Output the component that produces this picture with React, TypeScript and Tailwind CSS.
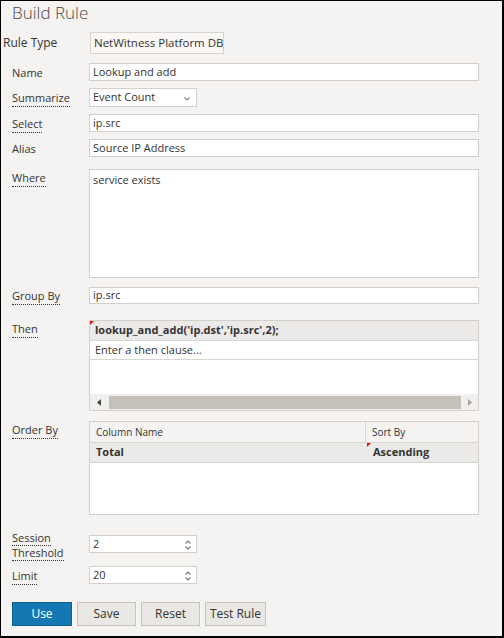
import React from "react";

const font = { fontFamily: '"Open Sans", "Noto Sans", sans-serif' };

function Label({ children, dotted = true, className = "" }: { children: React.ReactNode; dotted?: boolean; className?: string }) {
  return (
    <div className={`w-[77px] shrink-0 text-[11px] leading-[15px] text-[#333] ${className}`}>
      <span className={dotted ? "border-b border-dotted border-[#333] pb-[1px]" : ""}>{children}</span>
    </div>
  );
}

function RedMark() {
  return (
    <div className="absolute top-0 left-0 w-0 h-0 border-t-[4px] border-t-[#e01010] border-r-[4px] border-r-transparent" />
  );
}

function Spinner() {
  return (
    <svg width="8" height="12" viewBox="0 0 8 12" className="absolute right-[4px] top-[3px]">
      <path d="M1.5 4.5 L4 2 L6.5 4.5" fill="none" stroke="#777" strokeWidth="1.1" />
      <path d="M1.5 7.5 L4 10 L6.5 7.5" fill="none" stroke="#777" strokeWidth="1.1" />
    </svg>
  );
}

const inputCls = "h-full w-[390px] bg-white border border-[#d3d0cb] text-[11px] text-[#333] pl-[3px] flex items-center";

export default function App() {
  return (
    <div style={font} className="w-[504px] h-[638px] bg-[#f4f3f1] border-t border-l border-r-2 border-b-2 border-black flex flex-col">
      <div className="h-[31px] pl-[11px] pt-[1px] text-[17px] leading-[22px] font-light text-[#4a4a4a]">Build Rule</div>

      <div className="h-[22px] flex items-center pl-[2px]">
        <div className="w-[87px] shrink-0 text-[12px] text-[#333]">Rule Type</div>
        <div className="h-full w-[134px] border border-[#d8d5d0] bg-[#f9f8f7] text-[11.5px] text-[#333] flex items-center pl-[3px] whitespace-nowrap overflow-hidden">NetWitness Platform DB</div>
      </div>

      <div className="pl-[11px] flex flex-col">
        <div className="mt-[9px] h-[18px] flex items-center">
          <Label dotted={false}>Name</Label>
          <div className={inputCls}>Lookup and add</div>
        </div>

        <div className="mt-[7px] h-[19px] flex items-center">
          <Label>Summarize</Label>
          <div className="relative h-full w-[108px] bg-white border border-[#d3d0cb] text-[11px] text-[#333] pl-[3px] flex items-center">
            Event Count
            <svg width="8" height="6" viewBox="0 0 8 6" className="absolute right-[5px] top-[7px]">
              <path d="M1.5 1.5 L4 4 L6.5 1.5" fill="none" stroke="#888" strokeWidth="1.1" />
            </svg>
          </div>
        </div>

        <div className="mt-[7px] h-[18px] flex items-center">
          <Label>Select</Label>
          <div className={inputCls}>ip.src</div>
        </div>

        <div className="mt-[7px] h-[18px] flex items-center">
          <Label dotted={false}>Alias</Label>
          <div className={inputCls}>Source IP Address</div>
        </div>

        <div className="mt-[12px] h-[109px] flex items-start">
          <Label className="pt-[1px]">Where</Label>
          <div className="h-full w-[390px] bg-white border border-[#d3d0cb] text-[11px] text-[#333] pl-[3px] pt-[2px] leading-[15px]">service exists</div>
        </div>

        <div className="mt-[9px] h-[17px] flex items-center">
          <Label>Group By</Label>
          <div className={inputCls}>ip.src</div>
        </div>

        <div className="mt-[16px] h-[91px] flex items-start">
          <Label className="pt-[1px]">Then</Label>
          <div className="relative h-full w-[390px] bg-white border border-[#d3d0cb] flex flex-col">
            <RedMark />
            <div className="h-[20px] bg-[#ebeae8] border-b border-[#d8d6d2] text-[11px] font-bold text-[#333] pl-[5px] flex items-center">lookup_and_add('ip.dst','ip.src',2);</div>
            <div className="h-[19px] border-b border-[#d8d6d2] text-[11px] text-[#333] pl-[5px] flex items-center">Enter a then clause...</div>
            <div className="flex-1" />
            <div className="h-[16px] bg-[#f1f0ee] flex items-center">
              <div className="w-[19px] flex justify-center">
                <svg width="5" height="7" viewBox="0 0 5 7"><path d="M4 0 L0 3.5 L4 7 Z" fill="#444" /></svg>
              </div>
              <div className="h-[13px] w-[352px] bg-[#c4c1bb]" />
              <div className="flex-1 flex justify-center">
                <svg width="5" height="7" viewBox="0 0 5 7"><path d="M1 0 L5 3.5 L1 7 Z" fill="#a8a5a0" /></svg>
              </div>
            </div>
          </div>
        </div>

        <div className="mt-[10px] h-[94px] flex items-start">
          <Label className="pt-[1px]">Order By</Label>
          <div className="h-full w-[390px] bg-white border border-[#d3d0cb] flex flex-col">
            <div className="h-[21px] bg-[#f4f3f1] border-b border-[#d8d6d2] flex text-[10px] text-[#333]">
              <div className="w-[276px] border-r border-[#d8d6d2] pl-[6px] flex items-center">Column Name</div>
              <div className="flex-1 pl-[6px] flex items-center">Sort By</div>
            </div>
            <div className="h-[20px] bg-[#ebeae8] border-b border-[#d8d6d2] flex text-[11px] font-bold text-[#333]">
              <div className="w-[277px] pl-[6px] flex items-center">Total</div>
              <div className="relative flex-1 pl-[6px] flex items-center">
                <RedMark />
                Ascending
              </div>
            </div>
          </div>
        </div>

        <div className="mt-[20px] h-[18px] flex items-start">
          <div className="w-[77px] shrink-0 -mt-[5px] text-[11px] leading-[15px] text-[#333]">
            <span className="border-b border-dotted border-[#333]">Session</span>
            <br />
            <span className="border-b border-dotted border-[#333]">Threshold</span>
          </div>
          <div className="relative h-full w-[108px] bg-white border border-[#d3d0cb] text-[11px] text-[#333] pl-[3px] flex items-center">
            2
            <Spinner />
          </div>
        </div>

        <div className="mt-[13px] h-[18px] flex items-center">
          <Label>Limit</Label>
          <div className="relative h-full w-[108px] bg-white border border-[#d3d0cb] text-[11px] text-[#333] pl-[3px] flex items-center">
            20
            <Spinner />
          </div>
        </div>

        <div className="mt-[18px] h-[24px] flex gap-[5px] text-[12px]">
          <div className="w-[60px] h-full bg-[#1578b3] border border-[#0f5e90] text-white flex items-center justify-center">Use</div>
          <div className="w-[59px] h-full bg-[#e9e8e5] border border-[#c6c3be] text-[#333] flex items-center justify-center">Save</div>
          <div className="w-[59px] h-full bg-[#e9e8e5] border border-[#c6c3be] text-[#333] flex items-center justify-center">Reset</div>
          <div className="w-[61px] h-full bg-[#e9e8e5] border border-[#c6c3be] text-[#333] flex items-center justify-center">Test Rule</div>
        </div>
      </div>
    </div>
  );
}
